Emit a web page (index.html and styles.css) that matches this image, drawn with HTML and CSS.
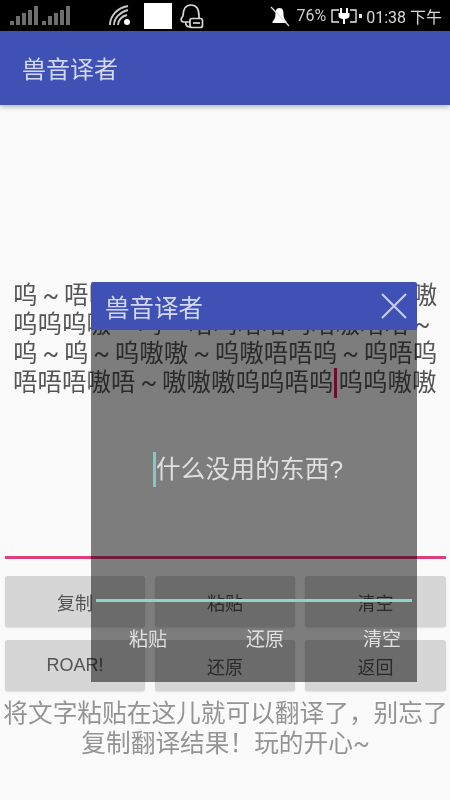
FILE: index.html
```html
<!DOCTYPE html>
<html lang="zh">
<head>
<meta charset="utf-8">
<title>兽音译者</title>
<link rel="stylesheet" href="styles.css">
</head>
<body>
<div class="screen">
  <header class="status">
    <div class="status-left">
      <svg class="signal" width="60" height="20" viewBox="0 0 60 20"><g fill="#6e6e6e"><rect x="0" y="15" width="4" height="4"/><rect x="6" y="10" width="4" height="9"/><rect x="12" y="7" width="4" height="12"/><rect x="18" y="4" width="4" height="15"/><rect x="24" y="0" width="4" height="19"/><rect x="32" y="15" width="4" height="4"/><rect x="38" y="10" width="4" height="9"/><rect x="44" y="7" width="4" height="12"/><rect x="50" y="4" width="4" height="15"/><rect x="56" y="0" width="4" height="19"/></g></svg>
      <svg class="wifi" width="22" height="21" viewBox="0 0 22 21"><g fill="none" stroke="#c8c8c8" stroke-width="1.900"><path d="M1 20C1 11 8 3 19 1"/><path d="M5 20C5 13 11 7 19 5"/><path d="M9 20C9 15 13 11 18 10"/></g><circle cx="18" cy="17" r="3" fill="#fff"/></svg>
      <div class="blank"></div>
      <svg class="qq" width="24" height="25" viewBox="0 0 24 25"><g fill="none" stroke="#d8d8d8" stroke-width="1.700"><path d="M10 18H4C1 18 0 15 3 12C3 5 6 1 11 1C16 1 19 5 19 12V14"/><path d="M6 18C5 21 7 23 10 23"/><rect x="10" y="14.500" width="12.500" height="9" rx="2"/><path d="M13 19H20"/></g></svg>
    </div>
    <div class="status-right">
      <svg class="bell" width="20" height="21" viewBox="0 0 20 21"><path d="M9.500 2C6 2 5.500 5 5.500 8C5.500 12 4 14 2.500 15.500V17H16.500V15.500C15 14 13.500 12 13.500 8C13.500 5 13 2 9.500 2Z" fill="#fff"/><path d="M1 1L19 20" stroke="#ddd" stroke-width="1.300"/></svg>
      <span class="pct">76%</span>
      <svg class="battery" width="31" height="18" viewBox="0 0 31 18"><g fill="none" stroke="#e6e6e6" stroke-width="1.400"><path d="M8 3H1V15H8"/><path d="M19 3H25V15H19"/></g><path d="M9 1V6H7.500V9C7.500 11 10 12 12 12V17H14V12C16 12 18.500 11 18.500 9V6H17V1H15V6H11V1Z" fill="#fff"/><rect x="28" y="7" width="3" height="4" fill="#e6e6e6"/></svg>
      <span class="clock">01:38 下午</span>
    </div>
  </header>

  <div class="appbar">兽音译者</div>

  <main class="content">
    <div class="field">
      <p class="roar">呜 ~ 唔呜呜 ~ 嗷唔 ~ 呜嗷呜 ~ 唔唔嗷嗷<br>呜呜呜嗷 ~ 呜 ~ 唔呜唔唔呜唔嗷唔唔 ~<br>呜 ~ 呜 ~ 呜嗷嗷 ~ 呜嗷唔唔呜 ~ 呜唔呜<br>唔唔唔嗷唔 ~ 嗷嗷嗷呜呜唔呜<span class="caret-pink"></span>呜呜嗷嗷</p>
    </div>
    <div class="actions">
      <button class="btn">复制</button>
      <button class="btn">粘贴</button>
      <button class="btn">清空</button>
      <button class="btn">ROAR!</button>
      <button class="btn">还原</button>
      <button class="btn">返回</button>
    </div>
    <p class="hint">将文字粘贴在这儿就可以翻译了，别忘了<br>复制翻译结果！玩的开心~</p>
  </main>

  <section class="dialog">
    <div class="dialog-head">
      <span class="dialog-title">兽音译者</span>
      <svg class="close" width="28" height="28" viewBox="0 0 28 28"><path d="M2 2L26 26M26 2L2 26" stroke="#c5cbe9" stroke-width="2.200" fill="none"/></svg>
    </div>
    <div class="dialog-body">
      <div class="dialog-text"><span class="caret-teal"></span>什么没用的东西?</div>
      <div class="dialog-line"></div>
      <div class="dialog-actions">
        <span>粘贴</span>
        <span>还原</span>
        <span>清空</span>
      </div>
    </div>
  </section>
</div>
</body>
</html>
```

FILE: styles.css
```css
* { box-sizing: border-box; }
html, body { margin: 0; padding: 0; }
body {
  width: 450px;
  height: 800px;
  overflow: hidden;
  background: #fafafa;
  font-family: "Roboto", "Noto Sans CJK SC", sans-serif;
}
.screen {
  position: relative;
  width: 450px;
  height: 800px;
  overflow: hidden;
  background: #fafafa;
  filter: blur(0.45px);
}
.status {
  height: 31px;
  background: #000;
  display: flex;
  justify-content: space-between;
  align-items: center;
  padding: 0 8px 0 10px;
}
.status-left, .status-right { display: flex; align-items: center; }
.signal { display: block; margin-top: 1px; }
.wifi { display: block; margin-left: 39px; }
.blank { width: 28px; height: 26px; background: #fff; margin-left: 13px; }
.qq { display: block; margin-left: 8px; margin-top: 1px; }
.bell { display: block; margin-top: 2px; }
.pct { color: #cfcfcf; font-size: 16px; margin-left: 6px; }
.battery { display: block; margin-left: 5px; margin-top: 1px; }
.clock { color: #d8d8d8; font-size: 16px; margin-left: 4px; white-space: nowrap; }
.appbar {
  height: 74px;
  background: #3f51b5;
  color: #d3d9f3;
  font-size: 24px;
  line-height: 74px;
  padding: 2px 0 0 22px;
  box-shadow: 0 2px 5px rgba(0, 0, 0, 0.28);
  position: relative;
}
.content { padding: 0 4px 0 5px; }
.field {
  height: 454px;
  padding: 176px 0 0 8px;
  border-bottom: 3px solid #de3f7a;
}
.roar {
  margin: 0;
  color: #555;
  font-size: 24.5px;
  line-height: 29px;
  word-spacing: -1.2px;
  white-space: nowrap;
}
.caret-pink {
  display: inline-block;
  width: 3px;
  height: 30px;
  margin: 0 1px 0 1px;
  vertical-align: -7px;
  background: #d81b60;
}
.actions {
  display: grid;
  grid-template-columns: 140px 140px 141px;
  grid-auto-rows: 51px;
  gap: 13px 10px;
  margin-top: 17px;
}
.btn {
  border: 0;
  border-radius: 3px;
  background: #d6d6d6;
  color: #555;
  font: 18px "Liberation Sans", "Noto Sans CJK SC", sans-serif;
  padding: 0;
  box-shadow: 0 1px 2px rgba(0, 0, 0, 0.12);
}
.hint {
  margin: 8px -5px 0 -5px;
  color: #949494;
  font-size: 24.7px;
  line-height: 30px;
  text-align: center;
  white-space: nowrap;
}
.dialog {
  position: absolute;
  left: 91px;
  top: 282px;
  width: 326px;
  height: 400px;
  display: flex;
  flex-direction: column;
}
.dialog-head {
  height: 48px;
  background: #3f51b5;
  border-radius: 2px 2px 0 0;
  display: flex;
  align-items: center;
  justify-content: space-between;
  padding: 0 9px 0 14px;
}
.dialog-title { color: #d3d9f3; font-size: 24.5px; }
.close { display: block; }
.dialog-body {
  flex: 1;
  background: rgba(0, 0, 0, 0.5);
  padding-top: 122px;
}
.dialog-text {
  color: #e0e0e0;
  font-family: "Liberation Sans", "Noto Sans CJK SC", sans-serif;
  font-size: 24.5px;
  line-height: 36px;
  letter-spacing: 0.3px;
  padding-left: 62px;
  white-space: nowrap;
}
.caret-teal {
  display: inline-block;
  width: 3px;
  height: 35px;
  vertical-align: -9px;
  background: #80cbc4;
}
.dialog-line {
  height: 3px;
  background: #8fd3cb;
  margin: 111px 5px 0;
}
.dialog-actions {
  display: grid;
  grid-template-columns: repeat(3, 70px);
  gap: 47px;
  padding-left: 22px;
  margin-top: 26px;
  color: #e0e0e0;
  font-size: 19px;
  line-height: 24px;
  text-align: center;
}
```
